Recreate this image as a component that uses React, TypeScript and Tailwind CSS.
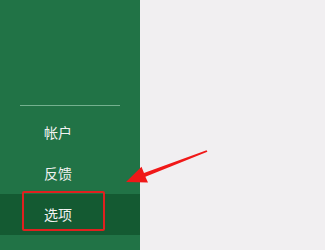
const ITEMS = [
  { label: "帐户", active: false },
  { label: "反馈", active: false },
  { label: "选项", active: true },
];

export default function App() {
  return (
    <div className="relative flex h-[250px] w-[325px] overflow-hidden bg-[#f1eff1] font-['Noto_Sans_CJK_SC','Noto_Sans',sans-serif]">
      {/* Backstage sidebar */}
      <aside className="flex w-[140px] shrink-0 flex-col bg-[#217346] pt-[105px]">
        <div className="mx-[20px] h-px bg-[#74b18f]" />
        <nav className="mt-[6px] flex flex-col">
          {ITEMS.map(({ label, active }) => (
            <div
              key={label}
              className={[
                "relative flex h-[41px] items-center pl-[44px] text-[14px] text-[#f2f2f2]",
                active ? "bg-[#145a32]" : "",
              ].join(" ")}
            >
              {label}
              {active && (
                <span className="absolute left-[22px] top-[-3px] h-[40px] w-[83px] rounded-[2px] border-2 border-[#e0201f]" />
              )}
            </div>
          ))}
        </nav>
      </aside>

      {/* Annotation arrow */}
      <svg
        className="absolute left-0 top-0"
        width="325"
        height="250"
        viewBox="0 0 325 250"
      >
        <polygon
          points="126,182 141.5,166.8 144,172.9 206.6,150.2 207.4,151.8 145.4,176.7 148,182.6"
          fill="#f01818"
        />
      </svg>
    </div>
  );
}
